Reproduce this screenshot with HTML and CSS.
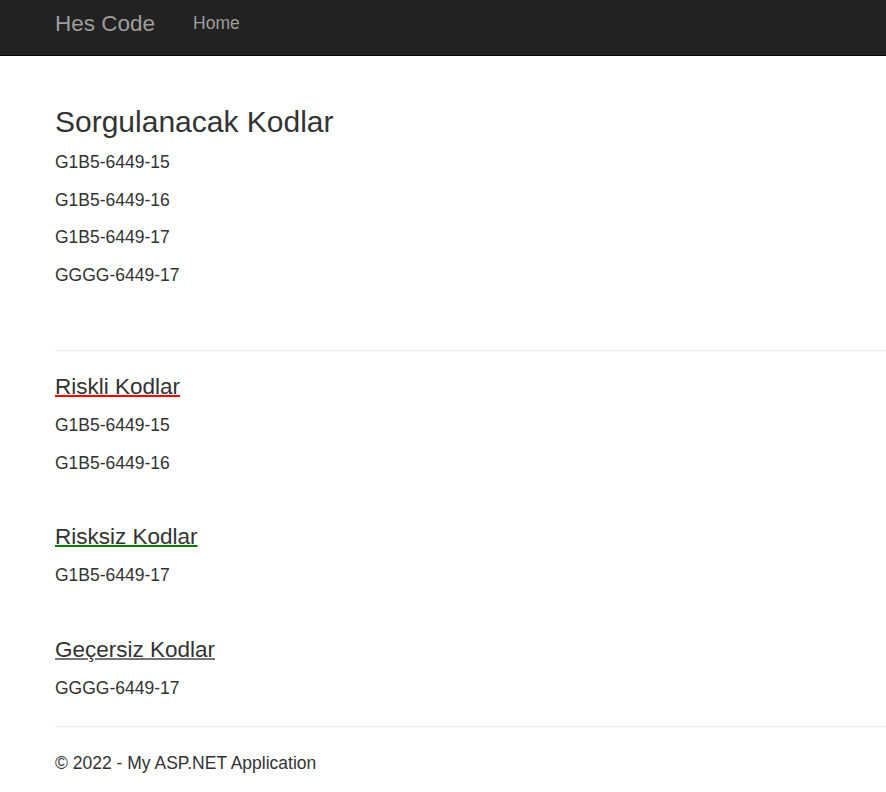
FILE: index.html
```html
<!DOCTYPE html>
<html lang="tr">
<head>
<meta charset="utf-8">
<title>Hes Code</title>
<link rel="stylesheet" href="styles.css">
</head>
<body>
<nav class="navbar">
  <a class="brand" href="#">Hes Code</a>
  <a class="nav-link" href="#">Home</a>
</nav>
<main class="content">
  <h3 class="title">Sorgulanacak Kodlar</h3>
  <p class="code">G1B5-6449-15</p>
  <p class="code">G1B5-6449-16</p>
  <p class="code">G1B5-6449-17</p>
  <p class="code">GGGG-6449-17</p>
  <hr class="rule rule-top">
  <section class="section">
    <h4 class="sub sub-risk">Riskli Kodlar</h4>
    <p class="code">G1B5-6449-15</p>
    <p class="code">G1B5-6449-16</p>
  </section>
  <section class="section">
    <h4 class="sub sub-safe">Risksiz Kodlar</h4>
    <p class="code">G1B5-6449-17</p>
  </section>
  <section class="section">
    <h4 class="sub sub-invalid">Geçersiz Kodlar</h4>
    <p class="code">GGGG-6449-17</p>
  </section>
  <hr class="rule rule-bottom">
  <footer class="footer">
    <p class="code">© 2022 - My ASP.NET Application</p>
  </footer>
</main>
</body>
</html>
```
FILE: styles.css
```css
html, body {
  margin: 0;
  padding: 0;
  background: #fff;
}
body {
  font-family: "Liberation Sans", Arial, Helvetica, sans-serif;
  font-size: 17.5px;
  line-height: 25px;
  color: #333;
}
.navbar {
  display: flex;
  align-items: flex-start;
  height: 55px;
  background: #222;
  border-bottom: 1px solid #080808;
  padding-left: 55px;
  box-sizing: content-box;
}
.brand {
  color: #9d9d9d;
  text-decoration: none;
  font-size: 22.5px;
  line-height: 25px;
  padding-top: 10.5px;
}
.nav-link {
  color: #9d9d9d;
  text-decoration: none;
  font-size: 17.5px;
  line-height: 25px;
  padding-top: 10.5px;
  margin-left: 38px;
}
.content {
  padding-left: 55px;
  display: flow-root;
}
.title {
  font-size: 30px;
  line-height: 33px;
  font-weight: 500;
  margin: 48.5px 0 12.5px;
}
.code {
  margin: 0 0 12.5px;
}
.rule {
  border: 0;
  border-top: 1px solid #eee;
  height: 0;
}
.rule-top {
  margin: 62.5px 0 24px;
}
.rule-bottom {
  margin: 25px 0 24.5px;
}
.section + .section {
  margin-top: 49.25px;
}
.sub {
  font-size: 22.5px;
  line-height: 24.75px;
  font-weight: 500;
  margin: 0 0 13.5px;
  display: block;
  text-decoration: underline;
  text-decoration-thickness: 2px;
}
.sub-risk { text-decoration-color: #ff0000; }
.sub-safe { text-decoration-color: #008000; }
.sub-invalid { text-decoration-color: #777; }
.footer .code {
  margin: 0 0 12px;
}
```
